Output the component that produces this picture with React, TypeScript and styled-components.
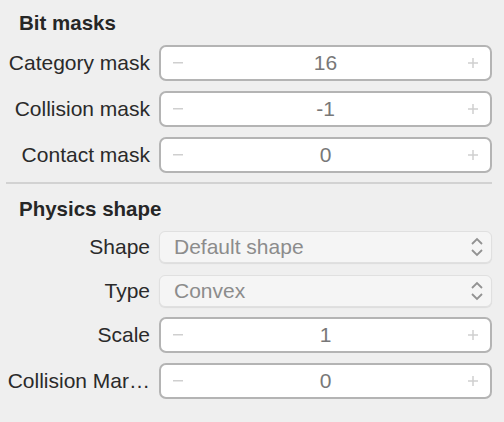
import React from 'react';
import styled, { createGlobalStyle } from 'styled-components';

const GlobalStyle = createGlobalStyle`
    html, body {
        margin: 0;
        padding: 0;
        background-color: #efefef;
    }
    body {
        font-family: "Liberation Sans", Arial, sans-serif;
    }
`

const Panel = styled.div`
    display: flex;
    flex-direction: column;
    width: 504px;
    height: 422px;
    padding: 0 12px 0 0;
    box-sizing: border-box;
    background-color: #efefef;
`

const Section = styled.div<{ $gap: number; $top?: number }>`
    display: flex;
    flex-direction: column;
    gap: ${(p) => p.$gap}px;
    padding-top: ${(p) => p.$top ?? 0}px;
`

const Heading = styled.h2`
    margin: 0;
    padding-left: 19px;
    height: 28px;
    line-height: 32px;
    font-size: 20.5px;
    font-weight: 700;
    color: #262626;
`

const Row = styled.div`
    display: grid;
    grid-template-columns: 145px 1fr;
    column-gap: 9px;
    align-items: center;
    padding-left: 5px;
`

const Label = styled.label`
    text-align: right;
    font-size: 21px;
    color: #2a2a2a;
    white-space: nowrap;
`

const StepperBox = styled.div`
    display: flex;
    align-items: center;
    height: 36px;
    box-sizing: border-box;
    border: 2px solid #b4b4b4;
    border-radius: 7px;
    background-color: #ffffff;
    padding: 0 12px 0 12px;
`

const StepButton = styled.span`
    width: 10px;
    display: flex;
    justify-content: center;
`

const Value = styled.span`
    flex: 1;
    text-align: center;
    font-size: 21px;
    color: #787878;
`

const PopupBox = styled.div`
    display: flex;
    align-items: center;
    height: 32px;
    box-sizing: border-box;
    border: 1px solid #e0e0e0;
    border-radius: 6px;
    background-color: #f5f5f5;
    box-shadow: 0 1px 1px rgba(0, 0, 0, 0.08);
    padding: 0 7px 0 14px;
`

const PopupText = styled.span`
    flex: 1;
    font-size: 21px;
    color: #8c8c8c;
`

const Separator = styled.hr`
    margin: 9px 0 0 6px;
    border: none;
    height: 2px;
    background-color: #d2d2d2;
`

const Stepper = ({ label, value }: { label: string; value: string }) => (
    <Row>
        <Label>{label}</Label>
        <StepperBox>
            <StepButton>
                <svg width="10" height="2" viewBox="0 0 10 2">
                    <rect x="0" y="0" width="10" height="1.5" fill="#cfcfcf" />
                </svg>
            </StepButton>
            <Value>{value}</Value>
            <StepButton>
                <svg width="10" height="10" viewBox="0 0 10 10">
                    <rect x="0" y="4.25" width="10" height="1.5" fill="#cfcfcf" />
                    <rect x="4.25" y="0" width="1.5" height="10" fill="#cfcfcf" />
                </svg>
            </StepButton>
        </StepperBox>
    </Row>
)

const Popup = ({ label, value }: { label: string; value: string }) => (
    <Row>
        <Label>{label}</Label>
        <PopupBox>
            <PopupText>{value}</PopupText>
            <svg width="14" height="20" viewBox="0 0 14 20">
                <polyline points="2,7 7,2 12,7" fill="none" stroke="#929292" strokeWidth="1.8" />
                <polyline points="2,13 7,18 12,13" fill="none" stroke="#929292" strokeWidth="1.8" />
            </svg>
        </PopupBox>
    </Row>
)

const App: React.FC = () => {
    return (
        <>
            <GlobalStyle />
            <Panel>
                <Section $gap={10} $top={7}>
                    <Heading>Bit masks</Heading>
                    <Stepper label="Category mask" value="16" />
                    <Stepper label="Collision mask" value="-1" />
                    <Stepper label="Contact mask" value="0" />
                </Section>
                <Separator />
                <Section $gap={10} $top={9}>
                    <Heading>Physics shape</Heading>
                    <Section $gap={12}>
                        <Popup label="Shape" value="Default shape" />
                        <Popup label="Type" value="Convex" />
                    </Section>
                    <Section $gap={10}>
                        <Stepper label="Scale" value="1" />
                        <Stepper label="Collision Mar…" value="0" />
                    </Section>
                </Section>
            </Panel>
        </>
    );
}

export default App;
